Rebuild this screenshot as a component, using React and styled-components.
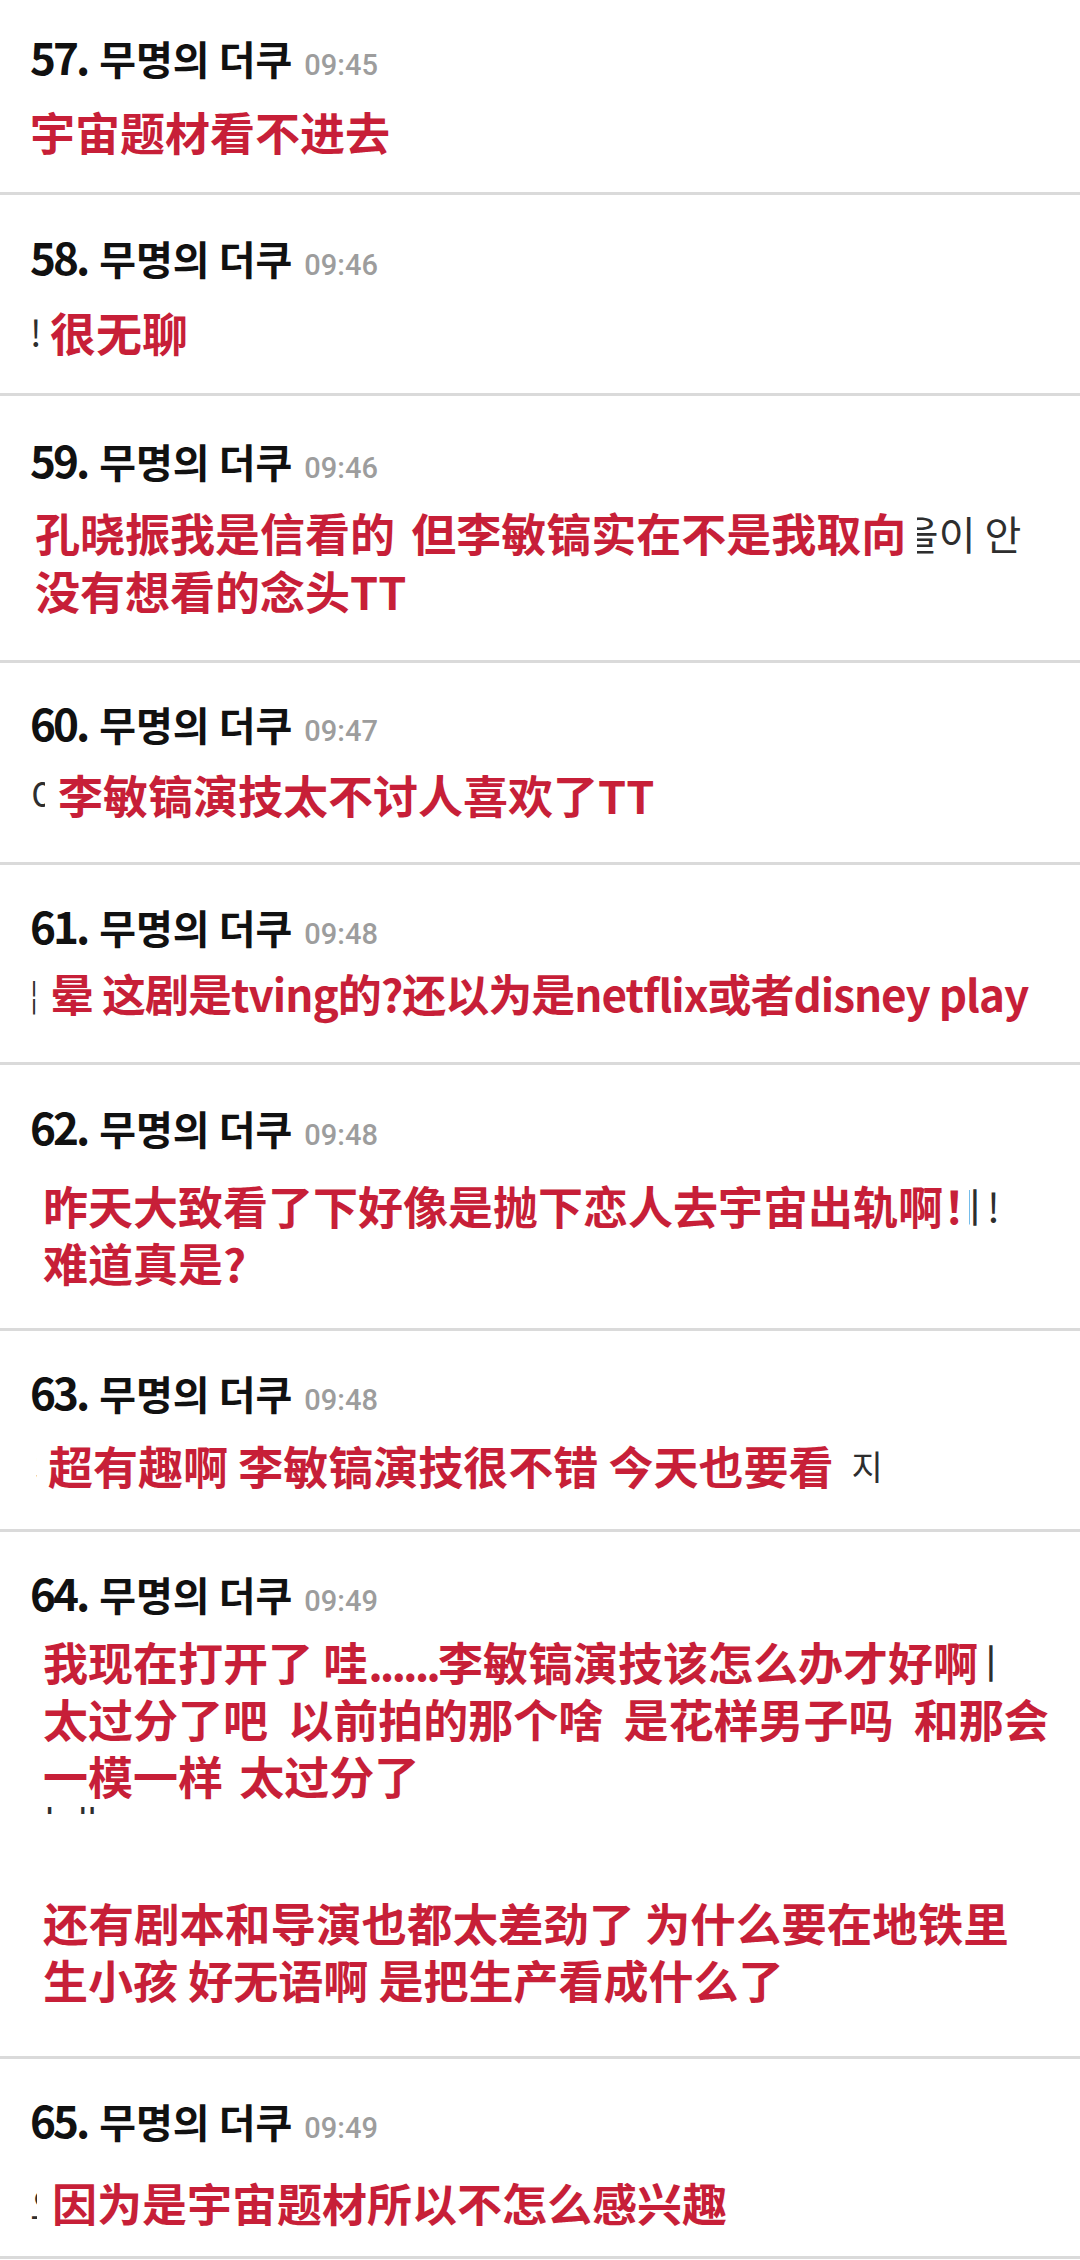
import React from 'react';
import styled, { createGlobalStyle } from 'styled-components';

const GlobalStyle = createGlobalStyle`
  html, body {
    margin: 0;
    padding: 0;
    background: #fff;
  }
  body {
    width: 1080px;
    font-family: "Noto Sans CJK KR", "Noto Sans", sans-serif;
  }
`;

const Dots = styled.span`
  letter-spacing: -3px;
`;

// x = where the red overlay starts on the page, left/right = bits of the
// original korean line still peeking out around the pasted translation
const posts = [
  { no: 57, time: '09:45', pt: 38, gap: 30, pb: 32, size: 45, lh: 56, lines: [
    { x: 30, t: '宇宙题材看不进去' },
  ] },
  { no: 58, time: '09:46', pt: 43, gap: 29, pb: 34, size: 46, lh: 56, lines: [
    { x: 50, left: { t: '!', w: 9, size: 36 }, t: '很无聊' },
  ] },
  { no: 59, time: '09:46', pt: 45, gap: 27, pb: 40, size: 45, lh: 58, lines: [
    { x: 35, t: '孔晓振我是信看的 但李敏镐实在不是我取向', ws: 6, right: { t: '을이 안', w: 104, gap: 11 } },
    { x: 35, t: '没有想看的念头TT' },
  ] },
  { no: 60, time: '09:47', pt: 41, gap: 27, pb: 39, size: 45, lh: 56, lines: [
    { x: 58, left: { t: '이', w: 15 }, t: '李敏镐演技太不讨人喜欢了TT' },
  ] },
  { no: 61, time: '09:48', pt: 42, gap: 22, pb: 41, size: 44, lh: 56, lines: [
    { x: 50, left: { t: '¦', w: 12, size: 30 }, ls: -1, t: '晕 这剧是tving的?还以为是netflix或者disney play' },
  ] },
  { no: 62, time: '09:48', pt: 43, gap: 33, pb: 37, size: 45, lh: 57, lines: [
    { x: 43, t: '昨天大致看了下好像是抛下恋人去宇宙出轨啊！', right: { t: 'ㅔ!', w: 31, gap: -19 } },
    { x: 43, t: '难道真是?' },
  ] },
  { no: 63, time: '09:48', pt: 42, gap: 29, pb: 35, size: 45, lh: 56, lines: [
    { x: 48, left: { t: 'ㅈ', w: 7 }, t: '超有趣啊 李敏镐演技很不错 今天也要看', right: { t: '지', gap: 18, size: 34 } },
  ] },
  { no: 64, time: '09:49', pt: 42, gap: 23, pb: 48, size: 45, lh: 57, lines: [
    { x: 43, t: <>我现在打开了 哇<Dots>......</Dots>李敏镐演技该怎么办才好啊</>, right: { t: 'ㅔ', w: 15, gap: 10 } },
    { x: 43, t: '太过分了吧 以前拍的那个啥 是花样男子吗 和那会', ws: 10 },
    { x: 43, t: '一模一样 太过分了', ws: 6 },
    { stubs: true, mt: 3 },
    { x: 43, mt: 80, size: 45.5, t: '还有剧本和导演也都太差劲了 为什么要在地铁里', right: { t: 'ㅓ', w: 12, gap: 6 } },
    { x: 43, size: 45, t: '生小孩 好无语啊 是把生产看成什么了' },
  ] },
  { no: 65, time: '09:49', pt: 42, gap: 38, pb: 25, size: 45, lh: 56, lines: [
    { x: 52, left: { t: '오', w: 7 }, t: '因为是宇宙题材所以不怎么感兴趣' },
  ] },
];

function Post({ post }) {
  return (
    <Item $pt={post.pt} $pb={post.pb}>
      <Header>
        <No>{post.no}.</No>
        <Nick>무명의 더쿠</Nick>
        <Time>{post.time}</Time>
      </Header>
      <Body $gap={post.gap}>
        {post.lines.map((line, i) => {
          if (line.stubs) {
            return (
              <Stubs key={i} $mt={line.mt}>
                <span>ㅣ</span>
                <span>ㅐ</span>
              </Stubs>
            );
          }
          const indent = line.x - 30 - (line.left ? line.left.w : 0);
          return (
            <Line key={i} $lh={post.lh} $mt={line.mt}>
              {line.left && (
                <Frag $w={line.left.w} $lh={post.lh} $size={line.left.size}>
                  <span>{line.left.t}</span>
                </Frag>
              )}
              <Red
                $indent={indent}
                $size={line.size || post.size}
                $lh={post.lh}
                $ws={line.ws}
                $ls={line.ls}
              >
                {line.t}
              </Red>
              {line.right && (
                <Frag $w={line.right.w} $gap={line.right.gap} $lh={post.lh} $size={line.right.size} $side="right">
                  <span>{line.right.t}</span>
                </Frag>
              )}
            </Line>
          );
        })}
      </Body>
    </Item>
  );
}

export default function App() {
  return (
    <>
      <GlobalStyle />
      <List>
        {posts.map(p => <Post key={p.no} post={p} />)}
      </List>
    </>
  );
}

const List = styled.div`
  width: 1080px;
  background: #fff;
`;

const Item = styled.div`
  padding: ${p => p.$pt}px 0 ${p => p.$pb}px 30px;
  border-bottom: 3px solid #dadada;
`;

const Header = styled.div`
  display: flex;
  align-items: baseline;
  height: 36px;
  line-height: 36px;
  white-space: nowrap;
  color: #111;
  font-family: "Noto Sans CJK KR", sans-serif;
  font-weight: 700;
`;

const No = styled.span`
  font-size: 44px;
  letter-spacing: -3px;
  margin-right: 12px;
`;

const Nick = styled.span`
  font-size: 40px;
  margin-right: 12px;
`;

const Time = styled.span`
  font-family: Roboto, "Liberation Sans", sans-serif;
  font-weight: 500;
  font-size: 29px;
  color: #9d9d9d;
`;

const Body = styled.div`
  margin-top: ${p => p.$gap}px;
`;

const Line = styled.div`
  display: flex;
  align-items: flex-start;
  height: ${p => p.$lh}px;
  margin-top: ${p => p.$mt || 0}px;
`;

const Red = styled.div`
  margin-left: ${p => p.$indent}px;
  font-family: "Noto Sans CJK SC", "Noto Sans", sans-serif;
  font-weight: 700;
  font-size: ${p => p.$size}px;
  line-height: ${p => p.$lh}px;
  word-spacing: ${p => p.$ws || 0}px;
  letter-spacing: ${p => p.$ls || 0}px;
  color: #c71f38;
  white-space: pre;
`;

const Frag = styled.div`
  flex: none;
  display: flex;
  justify-content: ${p => (p.$side === 'right' ? 'flex-end' : 'flex-start')};
  width: ${p => (p.$w ? `${p.$w}px` : 'auto')};
  overflow: hidden;
  margin-left: ${p => p.$gap || 0}px;
  font-family: "Noto Sans CJK KR", sans-serif;
  font-size: ${p => p.$size || 40}px;
  line-height: ${p => p.$lh}px;
  color: #2e2e2e;
  white-space: pre;

  span {
    flex: none;
  }
`;

const Stubs = styled.div`
  display: flex;
  gap: 1px;
  height: 7px;
  overflow: hidden;
  margin-top: ${p => p.$mt}px;
  padding-left: 1px;
  font-family: "Noto Sans CJK KR", sans-serif;
  font-size: 40px;
  line-height: 40px;
  color: #2e2e2e;

  span {
    display: block;
    margin-top: -5px;
  }
`;
